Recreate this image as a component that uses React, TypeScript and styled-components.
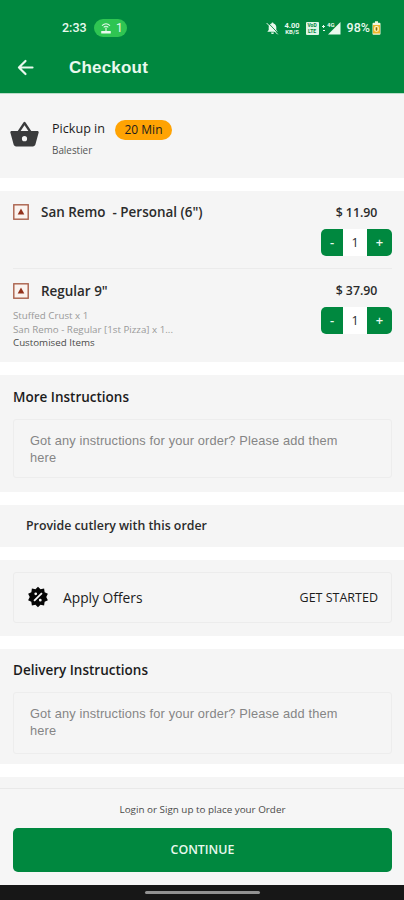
import React from 'react';
import styled, { createGlobalStyle } from 'styled-components';

const GREEN = '#00883f';
const GREY = '#f5f5f5';

const GlobalStyle = createGlobalStyle`
  * { box-sizing: border-box; }
  html, body { margin: 0; padding: 0; background: #fff; }
  body { font-family: "Open Sans", "Noto Sans", sans-serif; color: #2b2b2b; overflow: hidden; }
  svg { display: block; flex: none; }
`;

const Screen = styled.div`
  width: 404px;
  height: 900px;
  display: flex;
  flex-direction: column;
  overflow: hidden;
  background: #fff;
`;

const Header = styled.header`
  flex: none;
  height: 94px;
  background: ${GREEN};
  border-bottom: 1px solid #b9dcc8;
  color: #e9f9ee;
`;

const StatusBar = styled.div`
  display: flex;
  align-items: center;
  height: 38px;
  padding: 18px 23px 0 62px;
  font-family: Roboto, sans-serif;
`;

const Clock = styled.span`
  width: 32px;
  font-size: 12.5px;
  font-weight: 500;
  line-height: 18px;
`;

const HotspotPill = styled.span`
  display: flex;
  align-items: center;
  gap: 5px;
  height: 18px;
  width: 33px;
  padding-left: 7px;
  border-radius: 9px;
  background: #2fc552;
  font-size: 12px;
  line-height: 18px;
`;

const StatusIcons = styled.div`
  margin-left: auto;
  display: flex;
  align-items: center;
`;

const NetSpeed = styled.span`
  display: flex;
  flex-direction: column;
  align-items: center;
  width: 17px;
  margin-left: 5px;
  font-weight: 700;
`;

const NetSpeedValue = styled.span`
  height: 7px;
  font-size: 7.5px;
  line-height: 7px;
`;

const NetSpeedUnit = styled.span`
  height: 6px;
  font-size: 6px;
  line-height: 6px;
`;

const VoLte = styled.span`
  display: flex;
  flex-direction: column;
  align-items: center;
  justify-content: center;
  width: 13px;
  height: 13px;
  margin: 0 3px 0 5px;
  border-radius: 1px;
  background: #dff5e6;
  color: ${GREEN};
  font-size: 5px;
  font-weight: 700;
  line-height: 6px;
`;

const BatteryText = styled.span`
  margin: 0 2px 0 6px;
  font-size: 12.5px;
  font-weight: 500;
  line-height: 18px;
`;

const TitleBar = styled.div`
  display: flex;
  align-items: center;
  height: 56px;
  padding: 2px 0 0 15px;
`;

const Title = styled.h1`
  margin: 2px 0 0 33px;
  font: 700 17px/22px "Liberation Sans", sans-serif;
  letter-spacing: 0.2px;
`;

const Content = styled.main`
  display: flex;
  flex-direction: column;
  gap: 13px;
  height: 694px;
  overflow: hidden;
`;

const Section = styled.section<{ $h: number }>`
  flex: none;
  height: ${(p) => p.$h}px;
  background: ${GREY};
`;

const PickupSection = styled(Section)`
  display: flex;
  padding: 24px 0 0 9px;
`;

const PickupInfo = styled.div`
  margin-left: 12px;
`;

const PickupRow = styled.div`
  display: flex;
  align-items: center;
  height: 22px;
  font-size: 12.6px;
  font-weight: 500;
  color: #1c1c1c;
`;

const PickupLabel = styled.span`
  width: 54px;
  margin-top: -2px;
  white-space: nowrap;
`;

const TimeBadge = styled.span`
  width: 57px;
  height: 20px;
  margin: 1px 0 0 9px;
  border-radius: 10px;
  background: #ffa303;
  font-size: 12px;
  line-height: 20px;
  text-align: center;
`;

const Location = styled.div`
  font-size: 9.9px;
  line-height: 20px;
  color: #555;
`;

const CartItem = styled.article<{ $divided?: boolean }>`
  display: flex;
  justify-content: space-between;
  height: ${(p) => (p.$divided ? 78 : 92)}px;
  margin: 0 12px 0 13px;
  border-bottom: ${(p) => (p.$divided ? '1px solid #ebebeb' : 'none')};
`;

const ItemHeading = styled.div<{ $top: number }>`
  display: flex;
  align-items: center;
  gap: 12px;
  height: 18px;
  margin-top: ${(p) => p.$top}px;
`;

const ItemName = styled.h2`
  margin: 0;
  font-size: 13.45px;
  font-weight: 600;
  line-height: 18px;
  white-space: pre;
`;

const ItemOptions = styled.p<{ $dark?: boolean }>`
  margin: 0;
  font-size: 9.75px;
  line-height: 13.5px;
  color: ${(p) => (p.$dark ? '#4a4a4a' : '#999')};
`;

const OptionList = styled.div`
  margin-top: 9px;
`;

const PriceColumn = styled.div`
  display: flex;
  flex-direction: column;
  align-items: center;
  width: 71px;
  padding-top: 14px;
`;

const Price = styled.div`
  font-size: 12.3px;
  font-weight: 600;
  line-height: 16px;
`;

const Stepper = styled.div`
  display: flex;
  width: 71px;
  height: 27px;
  margin-top: 8px;
  border-radius: 5px;
  overflow: hidden;
  background: #fff;
`;

const StepButton = styled.button<{ $w: number }>`
  width: ${(p) => p.$w}px;
  padding: 0;
  border: 0;
  background: ${GREEN};
  color: #e9f9ee;
  font: 600 13px/27px "Open Sans", sans-serif;
`;

const Quantity = styled.span`
  flex: 1;
  font-size: 12.5px;
  font-weight: 500;
  line-height: 27px;
  text-align: center;
`;

const NoteSection = styled(Section)<{ $top: number }>`
  padding: ${(p) => p.$top}px 12px 0 13px;
`;

const SectionTitle = styled.h3`
  margin: 0 0 13px;
  font-size: 13.5px;
  font-weight: 600;
  line-height: 18px;
  color: #1c1c1c;
`;

const NoteBox = styled.div<{ $h: number }>`
  height: ${(p) => p.$h}px;
  padding: 12px 32px 0 16px;
  border: 1px solid #ededed;
  border-radius: 3px;
  font: 400 12.8px/17px "Liberation Sans", sans-serif;
  letter-spacing: 0.14px;
  color: #858585;
`;

const CutlerySection = styled(Section)`
  padding-left: 26px;
  font-size: 12.35px;
  font-weight: 600;
  line-height: 41px;
`;

const OfferSection = styled(Section)`
  padding: 12px 12px 0 13px;
`;

const OfferCard = styled.div`
  display: flex;
  align-items: center;
  height: 51px;
  padding: 0 13px 0 13px;
  border: 1px solid #ececec;
  border-radius: 3px;
  color: #1c1c1c;
`;

const OfferLabel = styled.span`
  margin-left: 14px;
  font-size: 13.8px;
  font-weight: 500;
`;

const OfferAction = styled.span`
  margin-left: auto;
  font-size: 12.5px;
  font-weight: 500;
`;

const Footer = styled.footer`
  flex: none;
  height: 97px;
  padding: 12px 12px 0 13px;
  border-top: 1px solid #e9e9e9;
  background: #f6f6f6;
`;

const LoginHint = styled.div`
  font-size: 9.85px;
  line-height: 17px;
  text-align: center;
  color: #4a4a4a;
`;

const ContinueButton = styled.button`
  display: block;
  width: 100%;
  height: 44px;
  margin-top: 10px;
  border: 0;
  border-radius: 5px;
  background: ${GREEN};
  color: #e9f9ee;
  font: 600 12.4px/44px "Open Sans", sans-serif;
  padding: 0;
`;

const NavBar = styled.div`
  flex: none;
  display: flex;
  justify-content: center;
  height: 15px;
  padding-top: 6px;
  background: #171717;
`;

const NavHandle = styled.span`
  width: 115px;
  height: 3px;
  border-radius: 2px;
  background: #929292;
`;

const ArrowIcon = () => (
  <svg width="21" height="21" viewBox="0 0 24 24" fill="none" stroke="#e9f9ee" strokeWidth="2.5" strokeLinecap="round" strokeLinejoin="round">
    <path d="M20 12H4.500M12 4.500L4.500 12l7.500 7.500" />
  </svg>
);

const HotspotIcon = () => (
  <svg width="10" height="11" viewBox="0 0 10 11" fill="none" stroke="#e9f9ee" strokeWidth="1.1">
    <path d="M1 2.6Q5-1 9 2.6M2.7 4.3Q5 2.3 7.3 4.3M5 4.4V8" />
    <path d="M.8 10V8.5h8.4V10z" fill="#e9f9ee" />
  </svg>
);

const BellOffIcon = () => (
  <svg width="13" height="13" viewBox="0 0 13 13">
    <path d="M6.5.6c.6 0 1 .4 1 .9 1.9.5 2.8 2 2.8 3.8v2.8l1.4 1.7H1.3l1.4-1.7V5.3c0-1.800.9-3.300 2.800-3.800 0-.5.4-.9 1-.9zM5 10.500h3a1.500 1.500 0 0 1-3 0z" fill="#e9f9ee" />
    <path d="M2 .8l10.400 10.700" stroke={GREEN} strokeWidth="0.9" />
    <path d="M.7 1.100l11 11.200" stroke="#e9f9ee" strokeWidth="1" />
  </svg>
);

const SignalIcon = () => (
  <svg width="19" height="14" viewBox="0 0 19 14" fill="#e9f9ee">
    <path d="M18.500 1v12.500H6z" />
    <path d="M0 5h3v1H0zM1 4h1v3H1zM1 9h2v1H1z" />
    <text x="5" y="5.500" fontFamily="Roboto" fontSize="6" fontWeight="700">4G</text>
  </svg>
);

const BatteryIcon = () => (
  <svg width="9" height="14" viewBox="0 0 9 14">
    <path d="M3 .3h3v1.500h1.500a1 1 0 0 1 1 1v10a1 1 0 0 1-1 1h-6a1 1 0 0 1-1-1v-10a1 1 0 0 1 1-1H3z" fill="#f3f7dc" />
    <path d="M1 4h7v8.500H1z" fill="#edb62b" />
    <rect x="2.700" y="5.500" width="3.600" height="4.800" rx="1.500" fill="none" stroke="#fff6d0" strokeWidth="1.100" />
    <path d="M4.500 6.500v3" stroke="#6f6a20" />
  </svg>
);

const BasketIcon = () => (
  <svg width="31" height="31" viewBox="0 -1 24 24" fill="#3a3b3c">
    <path d="M17.210 9l-4.380-6.560a1 1 0 0 0-1.660.010L6.790 9H2c-.55 0-1 .45-1 1 0 .09.010.18.040.27l2.540 9.270c.23.840 1 1.460 1.920 1.460h13c.92 0 1.690-.62 1.930-1.460l2.540-9.270L23 10c0-.55-.45-1-1-1zM9 9l3-4.400L15 9zm3 8a2 2 0 1 1 0-4 2 2 0 0 1 0 4z" />
  </svg>
);

const DietIcon = () => (
  <svg width="16" height="16" viewBox="0 0 16 16">
    <rect x=".8" y=".8" width="14.400" height="14.400" fill="#fbf3ef" stroke="#a9604b" strokeWidth="1.400" />
    <path d="M8 4.500l3.300 6.100H4.700z" fill="#93321c" />
  </svg>
);

const OfferIcon = () => (
  <svg width="22" height="22" viewBox="0 0 24 24" fill="#060606">
    <path d="M18.650 2.850L19.260 6.710L22.770 8.500L21 12L22.780 15.500L19.240 17.290L18.630 21.150L14.740 20.540L11.970 23.300L9.190 20.500L5.330 21.140L4.710 17.250L1.220 15.470L3 11.970L1.230 8.500L4.740 6.690L5.350 2.860L9.220 3.500L12 .690L14.770 3.460ZM9.500 7A1.500 1.500 0 0 0 9.500 10A1.500 1.500 0 0 0 9.500 7M14.500 14A1.500 1.500 0 0 0 14.500 17A1.500 1.500 0 0 0 14.500 14M8.410 17L17 8.410L15.590 7L7 15.590Z" />
  </svg>
);

const PriceControl = ({ price }: { price: string }) => (
  <PriceColumn>
    <Price>{price}</Price>
    <Stepper>
      <StepButton $w={22}>-</StepButton>
      <Quantity>1</Quantity>
      <StepButton $w={25}>+</StepButton>
    </Stepper>
  </PriceColumn>
);

const PLACEHOLDER = 'Got any instructions for your order? Please add them here';

export default function App() {
  return (
    <Screen>
      <GlobalStyle />
      <Header>
        <StatusBar>
          <Clock>2:33</Clock>
          <HotspotPill><HotspotIcon />1</HotspotPill>
          <StatusIcons>
            <BellOffIcon />
            <NetSpeed>
              <NetSpeedValue>4.00</NetSpeedValue>
              <NetSpeedUnit>KB/S</NetSpeedUnit>
            </NetSpeed>
            <VoLte><span>VoD</span><span>LTE</span></VoLte>
            <SignalIcon />
            <BatteryText>98%</BatteryText>
            <BatteryIcon />
          </StatusIcons>
        </StatusBar>
        <TitleBar>
          <ArrowIcon />
          <Title>Checkout</Title>
        </TitleBar>
      </Header>
      <Content>
        <PickupSection $h={84}>
          <BasketIcon />
          <PickupInfo>
            <PickupRow>
              <PickupLabel>Pickup in</PickupLabel>
              <TimeBadge>20 Min</TimeBadge>
            </PickupRow>
            <Location>Balestier</Location>
          </PickupInfo>
        </PickupSection>
        <Section $h={171}>
          <CartItem $divided>
            <ItemHeading $top={12}>
              <DietIcon />
              <ItemName>{'San Remo  - Personal (6")'}</ItemName>
            </ItemHeading>
            <PriceControl price="$ 11.90" />
          </CartItem>
          <CartItem>
            <div>
              <ItemHeading $top={13}>
                <DietIcon />
                <ItemName>Regular 9"</ItemName>
              </ItemHeading>
              <OptionList>
                <ItemOptions>Stuffed Crust x 1</ItemOptions>
                <ItemOptions>San Remo - Regular [1st Pizza] x 1...</ItemOptions>
                <ItemOptions $dark>Customised Items</ItemOptions>
              </OptionList>
            </div>
            <PriceControl price="$ 37.90" />
          </CartItem>
        </Section>
        <NoteSection $h={117} $top={13}>
          <SectionTitle>More Instructions</SectionTitle>
          <NoteBox $h={59}>{PLACEHOLDER}</NoteBox>
        </NoteSection>
        <CutlerySection $h={41.5}>Provide cutlery with this order</CutlerySection>
        <OfferSection $h={76}>
          <OfferCard>
            <OfferIcon />
            <OfferLabel>Apply Offers</OfferLabel>
            <OfferAction>GET STARTED</OfferAction>
          </OfferCard>
        </OfferSection>
        <NoteSection $h={115.5} $top={12}>
          <SectionTitle>Delivery Instructions</SectionTitle>
          <NoteBox $h={62}>{PLACEHOLDER}</NoteBox>
        </NoteSection>
        <Section $h={20} />
      </Content>
      <Footer>
        <LoginHint>Login or Sign up to place your Order</LoginHint>
        <ContinueButton>CONTINUE</ContinueButton>
      </Footer>
      <NavBar><NavHandle /></NavBar>
    </Screen>
  );
}
